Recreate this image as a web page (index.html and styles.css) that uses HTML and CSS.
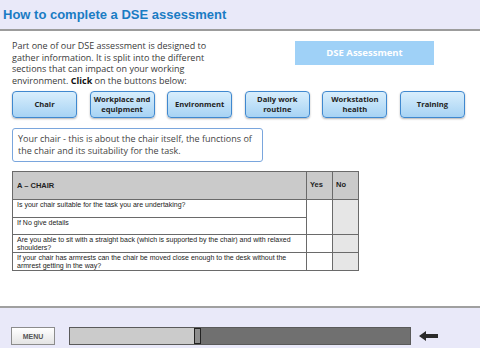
FILE: index.html
```html
<!DOCTYPE html>
<html lang="en">
    <head>
        <meta charset="UTF-8">
        <title>How to complete a DSE assessment</title>
        <link rel="stylesheet" href="styles.css">
    </head>
    <body>
        <div class="header">
            <h1>How to complete a DSE assessment</h1>
        </div>

        <div class="main">
            <div class="intro-row">
                <p class="intro">
                    Part one of our DSE assessment is designed to<br>
                    gather information. It is split into the different<br>
                    sections that can impact on your working<br>
                    environment. <b>Click</b> on the buttons below:
                </p>
                <div class="badge">DSE Assessment</div>
            </div>

            <div class="buttons">
                <button class="btn">Chair</button>
                <button class="btn">Workplace and<br>equipment</button>
                <button class="btn">Environment</button>
                <button class="btn">Daily work<br>routine</button>
                <button class="btn">Workstation<br>health</button>
                <button class="btn">Training</button>
            </div>

            <div class="desc">
                Your chair - this is about the chair itself, the functions of<br>
                the chair and its suitability for the task.
            </div>

            <table class="form">
                <thead>
                    <tr>
                        <th>A &ndash; CHAIR</th>
                        <th class="yn">Yes</th>
                        <th class="yn">No</th>
                    </tr>
                </thead>
                <tbody>
                    <tr class="r1">
                        <td>Is your chair suitable for the task you are undertaking?</td>
                        <td rowspan="2"></td>
                        <td rowspan="2" class="no"></td>
                    </tr>
                    <tr class="r2">
                        <td>If No give details</td>
                    </tr>
                    <tr class="r3">
                        <td>Are you able to sit with a straight back (which is supported by the chair) and with relaxed shoulders?</td>
                        <td></td>
                        <td class="no"></td>
                    </tr>
                    <tr class="r4">
                        <td>If your chair has armrests can the chair be moved close enough to the desk without the armrest getting in the way?</td>
                        <td></td>
                        <td class="no"></td>
                    </tr>
                </tbody>
            </table>
        </div>

        <div class="footer">
            <button class="menu">MENU</button>
            <div class="progress">
                <div class="done"></div>
                <div class="thumb"></div>
                <div class="rest"></div>
            </div>
            <svg class="back" width="19" height="10" viewBox="0 0 19 10">
                <path d="M0 5 L7 0 L7 3 L19 3 L19 7 L7 7 L7 10 Z" fill="#2b2b2b"/>
            </svg>
        </div>
    </body>
</html>
```

FILE: styles.css
```css
* {
    margin: 0;
    padding: 0;
    box-sizing: border-box;
}

body {
    width: 480px;
    height: 348px;
    display: flex;
    flex-direction: column;
    background: white;
    font-family: 'Open Sans', 'DejaVu Sans', sans-serif;
    overflow: hidden;
}

.header {
    height: 31px;
    background: #e9e9f9;
    border-bottom: 2px solid #9c9c9c;
    padding: 6px 0 0 3px;
}

h1 {
    font-family: 'Liberation Sans', Arial, sans-serif;
    font-size: 13px;
    font-weight: bold;
    color: #1a7cc4;
    line-height: 18px;
}

.main {
    flex: 1;
    padding: 9px 0 0 12px;
}

.intro-row {
    display: flex;
    align-items: flex-start;
}

.intro {
    width: 283px;
    font-size: 9px;
    line-height: 11.7px;
    color: #3a3a3a;
}

.intro b {
    color: #111;
}

.badge {
    width: 139px;
    height: 24px;
    margin-top: 1px;
    background: #9fd1f7;
    color: white;
    font-size: 9.5px;
    font-weight: bold;
    text-align: center;
    line-height: 24px;
}

.buttons {
    display: flex;
    justify-content: space-between;
    width: 453px;
    margin-top: 4px;
}

.btn {
    width: 65px;
    height: 27px;
    border: 1px solid #3f88cf;
    border-radius: 4px;
    background: linear-gradient(#d8eefc, #a7d3f4);
    box-shadow: 0 1px 2px rgba(0, 0, 0, 0.3);
    font-family: 'Open Sans', 'DejaVu Sans', sans-serif;
    font-size: 7.6px;
    font-weight: bold;
    line-height: 10px;
    color: #222;
    padding: 0 1px;
    white-space: nowrap;
}

.desc {
    width: 251px;
    height: 34px;
    margin-top: 10px;
    border: 1px solid #7aa6dd;
    border-radius: 3px;
    padding: 4px 5px;
    font-size: 9px;
    line-height: 12px;
    color: #444;
}

.form {
    width: 347px;
    margin-top: 9px;
    border-collapse: collapse;
    font-family: 'Liberation Sans', Arial, sans-serif;
    font-size: 7px;
    color: #222;
}

.form th,
.form td {
    border: 1px solid #6a6a6a;
    text-align: left;
    vertical-align: top;
    padding: 1px 4px 0;
    line-height: 8px;
}

.form th {
    height: 28px;
    background: #cacaca;
    font-weight: bold;
    font-size: 7.5px;
    vertical-align: middle;
}

.form th.yn {
    width: 26px;
    padding: 0 3px;
}

.form td.no {
    background: #e6e6e6;
}

.r1 td:first-child { height: 18px; }
.r2 td:first-child { height: 17px; }
.r3 td { height: 17px; }
.r4 td { height: 18px; }

.footer {
    height: 42px;
    border-top: 2px solid #a0a0a0;
    background: #e9e9f9;
    display: flex;
    align-items: flex-start;
    padding: 19px 0 0 11px;
}

.menu {
    width: 44px;
    height: 18px;
    border: 1px solid #8c8c8c;
    background: linear-gradient(#ffffff, #e4e4e4);
    font-family: 'Liberation Sans', Arial, sans-serif;
    font-size: 7px;
    font-weight: bold;
    color: #555;
}

.progress {
    width: 342px;
    height: 18px;
    margin-left: 14px;
    border: 1px solid #5a5a5a;
    display: flex;
}

.done {
    width: 124px;
    background: #cbcbcb;
}

.thumb {
    width: 7px;
    background: #8e8e8e;
    border: 1px solid #222;
}

.rest {
    flex: 1;
    background: #707070;
}

.back {
    margin: 4px 0 0 8px;
}
```
